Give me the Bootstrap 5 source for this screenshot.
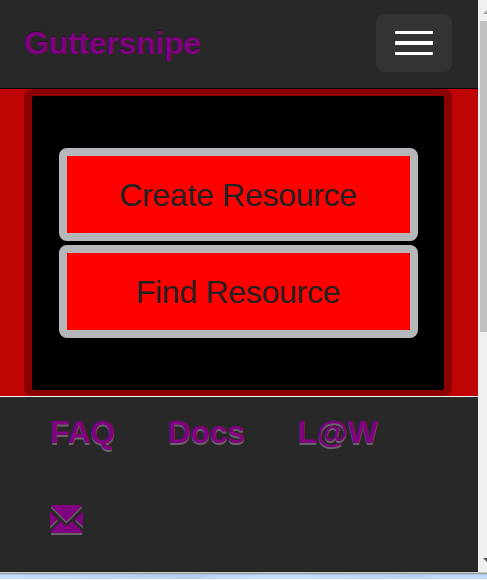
<!DOCTYPE html>
<html lang="en">
<head>
<meta charset="utf-8">
<meta name="viewport" content="width=device-width, initial-scale=1">
<title>Guttersnipe</title>
<link rel="stylesheet" href="https://cdn.jsdelivr.net/npm/bootstrap@5.3.0/dist/css/bootstrap.min.css">
<style>
body{font-family:"Liberation Sans",Arial,sans-serif;font-size:32px;line-height:40px;background:#282828;height:580px}
.viewer{height:572px}
.page-pane{width:478px}
.top-bar{height:89px;background:#282828;border-bottom:1px solid #000;padding:14px 26px 16px 24px}
.top-bar .navbar-brand{font-size:32px;line-height:40px;font-weight:700;letter-spacing:-.25px;color:purple;text-shadow:0 -1px 0 #1c1c1c;padding:0;margin:0}
.top-bar .navbar-brand:hover{color:purple}
.menu-toggle{width:76px;height:58px;background:#333;border:0;border-radius:8px;padding:0}
.stage{height:307px;background:#bf0404;padding:0 26px 0 24px}
.panel-box{height:307px;background:#8b0000;border-radius:8px;padding:7px 8px 6px}
.panel-inner{background:#000;border-radius:2px;padding:52px 26px 0 27px;gap:4px}
.action-btn{height:93px;border:8px solid #b5b7bb;border-radius:8px;background:#f00;color:#222;font-size:32px;line-height:40px;letter-spacing:-.28px;padding:0 1px 0 0}
.action-btn:hover{background:#f00;color:#222;border-color:#b5b7bb}
.foot{height:176px;background:#282828;border-top:1px solid #f3f3f3;padding:15px 50px 0}
.foot a{color:purple;font-weight:700;letter-spacing:-.3px;text-decoration:none;text-shadow:0 2px 0 #666}
.link-row{gap:52.8px;height:93px}
.scroll-rail{width:9px;background:#f0f0f0;padding-left:2px}
.scroll-thumb{height:311px;background:#c1c1c1}
.window-edge{height:8px;background:linear-gradient(#c9c7c3 0 1px,#9da3ab 1px 2px,#a9c3e0 2px 3px,transparent 3px 7px,#fff 7px),linear-gradient(90deg,#c4e0ff,#bcd9f8 15%,#b3d0f0 41%,#c0dcfb 45%,#c4e0ff 60%,#b5d2f2 86%,#bfdcfb 90%,#bfdbfb)}
</style>
<script src="https://cdn.jsdelivr.net/npm/bootstrap@5.3.0/dist/js/bootstrap.bundle.min.js"></script>
</head>
<body class="overflow-hidden">
<div class="viewer d-flex">
  <div class="page-pane d-flex flex-column">
    <nav class="top-bar navbar d-flex flex-nowrap align-items-center justify-content-between">
      <a class="navbar-brand" href="#">Guttersnipe</a>
      <button class="menu-toggle navbar-toggler d-flex align-items-center justify-content-center" type="button" aria-label="Menu">
        <svg width="38" height="24" viewBox="0 0 38 24" fill="#fff"><rect width="38" height="3" rx=".7"/><rect y="10" width="38" height="4" rx=".7"/><rect y="21" width="38" height="3" rx=".7"/></svg>
      </button>
    </nav>
    <main class="stage">
      <div class="panel-box d-flex">
        <div class="panel-inner d-flex flex-column flex-fill">
          <a class="action-btn btn d-flex align-items-center justify-content-center" href="#">Create Resource</a>
          <a class="action-btn btn d-flex align-items-center justify-content-center" href="#">Find Resource</a>
        </div>
      </div>
    </main>
    <footer class="foot">
      <div class="link-row d-flex"><a href="#">FAQ</a><a href="#">Docs</a><a href="#">L@W</a></div>
      <a class="d-block" href="#" aria-label="Email">
        <svg class="d-block" width="33" height="31" viewBox="0 0 33 31"><defs><g id="mail"><path d="M1 0H32V1L16.5 16.5L1 1Z"/><path d="M0 6.5L8 14L0 21.5Z"/><path d="M33 6.5L25 14L33 21.5Z"/><path d="M1 28V26L11 16L16.5 21L22 16L32 26V28Z"/></g></defs><use href="#mail" y="2" fill="#666"/><use href="#mail" fill="#800080"/></svg>
      </a>
    </footer>
  </div>
  <div class="scroll-rail d-flex flex-column">
    <svg class="d-block flex-shrink-0" width="7" height="21" viewBox="0 0 7 21"><path d="M3 14L7 10V14Z" fill="#a3a3a3"/></svg>
    <div class="scroll-thumb"></div>
    <svg class="d-block mt-auto" width="7" height="16" viewBox="0 0 7 16"><path d="M3 2H7V6Z" fill="#505050"/></svg>
  </div>
</div>
<div class="window-edge"></div>
</body>
</html>
